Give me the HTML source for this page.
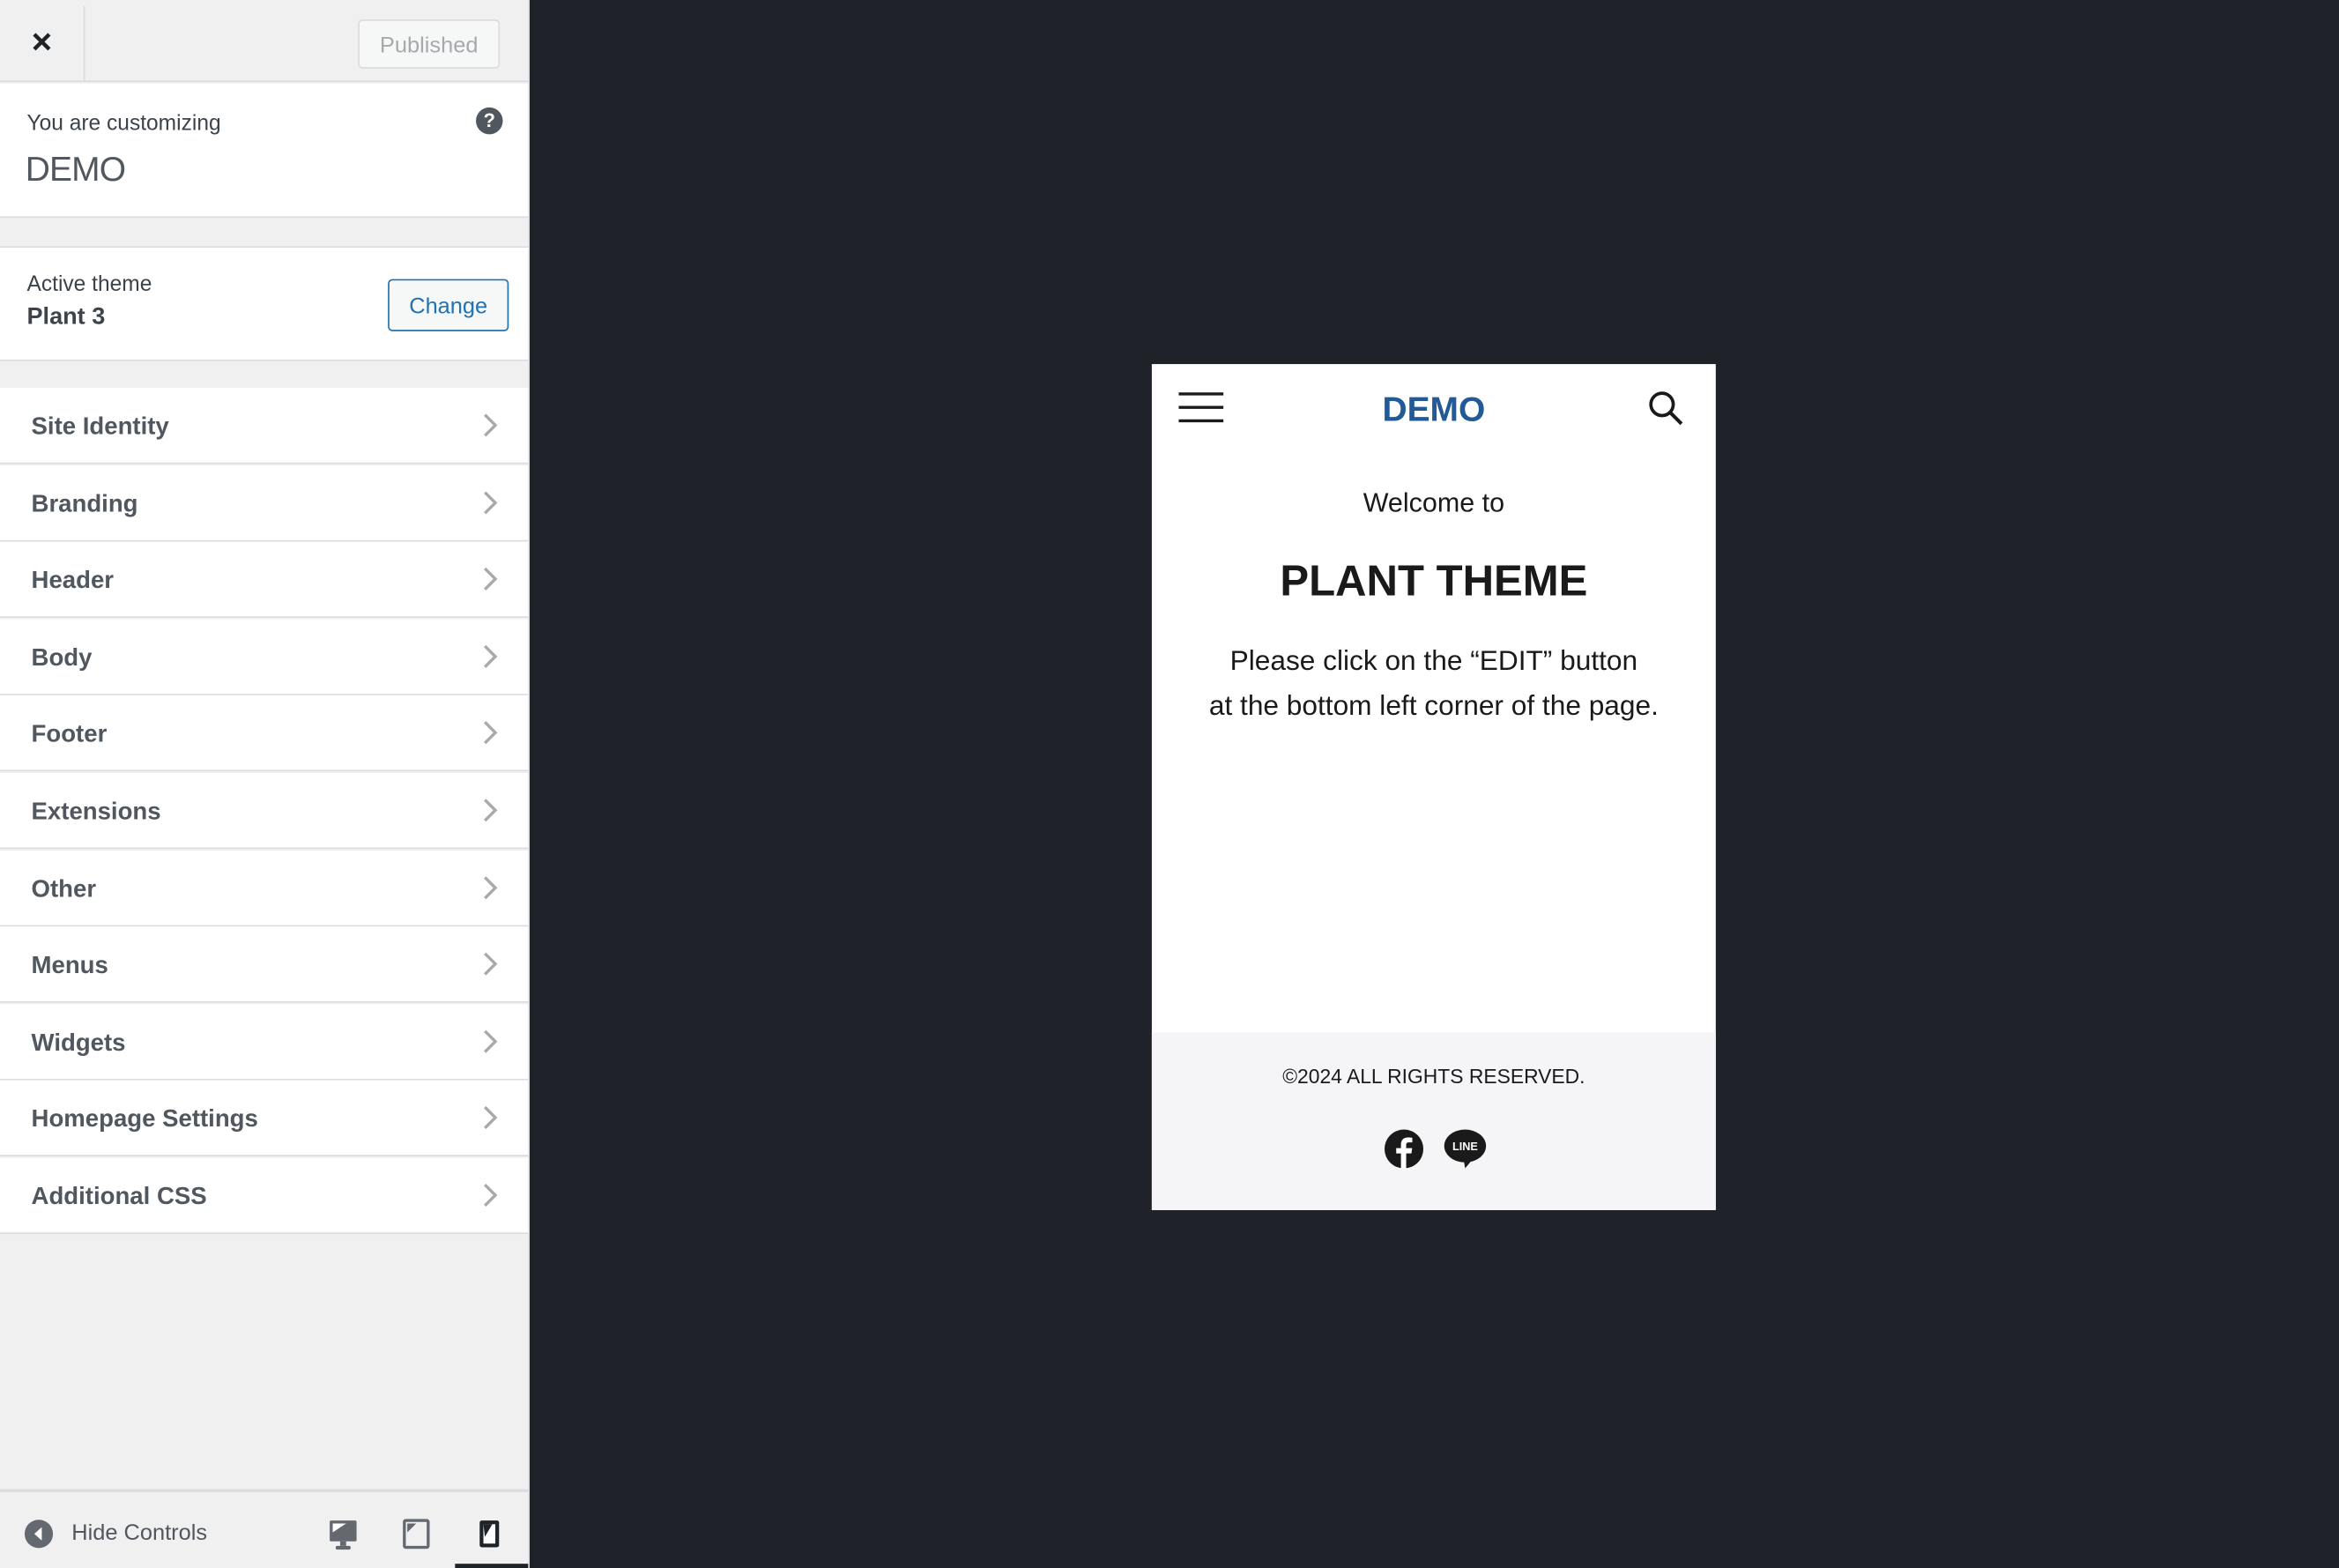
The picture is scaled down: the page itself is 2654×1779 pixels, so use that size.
<!DOCTYPE html>
<html><head><meta charset="utf-8"><style>
html,body{margin:0;padding:0;width:2654px;height:1778px;overflow:hidden;background:#1f2328;}
#w{position:absolute;left:0;top:0;width:1568px;height:1051px;transform:scale(1.6929);transform-origin:0 0;font-family:"Liberation Sans",sans-serif;}
.sb{position:absolute;left:0;top:0;width:354px;height:1051px;background:#f0f0f1;border-right:1px solid #dcdcde;}
.abs{position:absolute;}
.item{position:absolute;left:0;width:354px;height:50px;background:#fff;border-bottom:1.5px solid #dcdcde;}
.item span{position:absolute;left:21px;top:17px;font-size:16.3px;font-weight:bold;color:#50575e;}
.item svg{position:absolute;left:321px;top:16px;}
</style></head><body><div id="w">
<div class="abs" style="left:355px;top:0;width:1213px;height:1051px;background:#1f2329;"></div>
<div class="sb">
 <div class="abs" style="left:0;top:0;width:354px;height:54px;border-bottom:1.5px solid #dcdcde;"></div>
 <div class="abs" style="left:56px;top:4px;width:1px;height:50px;background:#dcdcde;"></div>
 <svg class="abs" style="left:21px;top:21px" width="14" height="14" viewBox="0 0 14 14"><path d="M2 2L12 12M12 2L2 12" stroke="#1d2327" stroke-width="2.6"/></svg>
 <div class="abs" style="left:240px;top:13px;width:93px;height:31px;border:1px solid #dcdcde;border-radius:3px;background:#f6f7f7;color:#a7aaad;font-size:15px;line-height:33px;text-align:center;">Published</div>
 <div class="abs" style="left:0;top:56px;width:354px;height:89px;background:#fff;border-bottom:1.5px solid #dcdcde;"></div>
 <div class="abs" style="left:18px;top:75px;font-size:14.5px;color:#3c434a;">You are customizing</div>
 <div class="abs" style="left:17px;top:100px;font-size:23px;color:#50575e;font-weight:300;letter-spacing:-0.5px;">DEMO</div>
 <div class="abs" style="left:319px;top:72px;width:18px;height:18px;border-radius:50%;background:#50575e;color:#fff;font-size:13px;font-weight:bold;text-align:center;line-height:18px;">?</div>
 <div class="abs" style="left:0;top:165px;width:354px;height:75px;background:#fff;border-top:1.5px solid #dcdcde;border-bottom:1.5px solid #dcdcde;"></div>
 <div class="abs" style="left:18px;top:183px;font-size:14.5px;color:#3c434a;">Active theme</div>
 <div class="abs" style="left:18px;top:204px;font-size:16px;font-weight:bold;color:#3c434a;">Plant 3</div>
 <div class="abs" style="left:260px;top:187px;width:79px;height:33px;border:1px solid #2271b1;border-radius:3px;background:#f6f7f7;color:#2271b1;font-size:15px;line-height:35px;text-align:center;">Change</div>

 <div class="item" style="top:260px"><span>Site Identity</span><svg width="14" height="18" viewBox="0 0 14 18"><path d="M4 2L11 9L4 16" fill="none" stroke="#a7aaad" stroke-width="2"/></svg></div>
 <div class="item" style="top:311.6px"><span>Branding</span><svg width="14" height="18" viewBox="0 0 14 18"><path d="M4 2L11 9L4 16" fill="none" stroke="#a7aaad" stroke-width="2"/></svg></div>
 <div class="item" style="top:363.2px"><span>Header</span><svg width="14" height="18" viewBox="0 0 14 18"><path d="M4 2L11 9L4 16" fill="none" stroke="#a7aaad" stroke-width="2"/></svg></div>
 <div class="item" style="top:414.8px"><span>Body</span><svg width="14" height="18" viewBox="0 0 14 18"><path d="M4 2L11 9L4 16" fill="none" stroke="#a7aaad" stroke-width="2"/></svg></div>
 <div class="item" style="top:466.4px"><span>Footer</span><svg width="14" height="18" viewBox="0 0 14 18"><path d="M4 2L11 9L4 16" fill="none" stroke="#a7aaad" stroke-width="2"/></svg></div>
 <div class="item" style="top:518px"><span>Extensions</span><svg width="14" height="18" viewBox="0 0 14 18"><path d="M4 2L11 9L4 16" fill="none" stroke="#a7aaad" stroke-width="2"/></svg></div>
 <div class="item" style="top:569.6px"><span>Other</span><svg width="14" height="18" viewBox="0 0 14 18"><path d="M4 2L11 9L4 16" fill="none" stroke="#a7aaad" stroke-width="2"/></svg></div>
 <div class="item" style="top:621.2px"><span>Menus</span><svg width="14" height="18" viewBox="0 0 14 18"><path d="M4 2L11 9L4 16" fill="none" stroke="#a7aaad" stroke-width="2"/></svg></div>
 <div class="item" style="top:672.8px"><span>Widgets</span><svg width="14" height="18" viewBox="0 0 14 18"><path d="M4 2L11 9L4 16" fill="none" stroke="#a7aaad" stroke-width="2"/></svg></div>
 <div class="item" style="top:724.4px"><span>Homepage Settings</span><svg width="14" height="18" viewBox="0 0 14 18"><path d="M4 2L11 9L4 16" fill="none" stroke="#a7aaad" stroke-width="2"/></svg></div>
 <div class="item" style="top:776px"><span>Additional CSS</span><svg width="14" height="18" viewBox="0 0 14 18"><path d="M4 2L11 9L4 16" fill="none" stroke="#a7aaad" stroke-width="2"/></svg></div>

 <div class="abs" style="left:0;top:998px;width:354px;height:1.5px;background:#dcdcde;"></div>
 <svg class="abs" style="left:15px;top:1017px" width="22" height="22" viewBox="0 0 22 22"><circle cx="11" cy="11" r="9.5" fill="#646970"/><path d="M13 6.5L8 11L13 15.5Z" fill="#fff"/></svg>
 <div class="abs" style="left:48px;top:1019px;font-size:15px;color:#50575e;">Hide Controls</div>
 <svg class="abs" style="left:220px;top:1017px" width="20" height="22" viewBox="0 0 20 22"><rect x="1" y="2" width="18" height="14" rx="1" fill="#646970"/><path d="M3 4H12L3 10Z" fill="#fff"/><rect x="8" y="16" width="4" height="3" fill="#646970"/><rect x="5" y="19" width="10" height="2.5" rx="1" fill="#646970"/></svg>
 <svg class="abs" style="left:270px;top:1017px" width="18" height="22" viewBox="0 0 18 22"><rect x="1" y="2" width="16" height="18" rx="1" fill="none" stroke="#646970" stroke-width="2"/><path d="M3 4H9L3 10Z" fill="#646970"/></svg>
 <svg class="abs" style="left:320px;top:1017px" width="16" height="22" viewBox="0 0 16 22"><rect x="1.5" y="2" width="13" height="18" rx="1.5" fill="#1d2327"/><rect x="4" y="4.5" width="8" height="13" fill="#fff"/><path d="M4 4.5H10L5 13Z" fill="#1d2327"/></svg>
 <div class="abs" style="left:305px;top:1048px;width:49px;height:3px;background:#1d2327;"></div>
</div>

<div class="abs" style="left:772px;top:244px;width:378px;height:567px;background:#fff;">
 <svg class="abs" style="left:18px;top:18px" width="31" height="24" viewBox="0 0 31 24"><path d="M0 2H30M0 11H30M0 20H30" stroke="#1a1a1a" stroke-width="2"/></svg>
 <div class="abs" style="left:0;top:17px;width:378px;text-align:center;font-size:23px;font-weight:bold;color:#215a96;">DEMO</div>
 <svg class="abs" style="left:332px;top:17px" width="26" height="26" viewBox="0 0 26 26"><circle cx="10" cy="10" r="7.5" fill="none" stroke="#1a1a1a" stroke-width="2.2"/><path d="M15.5 15.5L23 23" stroke="#1a1a1a" stroke-width="2.4"/></svg>
 <div class="abs" style="left:0;top:83px;width:378px;text-align:center;font-size:18px;color:#1a1a1a;">Welcome to</div>
 <div class="abs" style="left:0;top:130px;width:378px;text-align:center;font-size:29px;font-weight:bold;color:#1a1a1a;">PLANT THEME</div>
 <div class="abs" style="left:-10px;top:184px;width:398px;text-align:center;font-size:18.7px;line-height:30px;color:#1a1a1a;">Please click on the “EDIT” button<br>at the bottom left corner of the page.</div>
 <div class="abs" style="left:0;top:448px;width:378px;height:119px;background:#f5f5f7;">
  <div class="abs" style="left:0;top:22px;width:378px;text-align:center;font-size:13.5px;color:#1a1a1a;">©2024 ALL RIGHTS RESERVED.</div>
  <svg class="abs" style="left:155px;top:64px" width="28" height="28" viewBox="0 0 28 28"><circle cx="14" cy="14" r="13" fill="#1a1a1a"/><path d="M15.5 27V17H19L19.5 13.5H15.5V11.3C15.5 10.3 15.9 9.6 17.3 9.6H19.6V6.5C19.2 6.4 18 6.3 16.7 6.3 13.8 6.3 12 8 12 11V13.5H8.8V17H12V27Z" fill="#fff"/></svg>
  <svg class="abs" style="left:195px;top:64px" width="30" height="28" viewBox="0 0 30 28"><ellipse cx="15" cy="12" rx="14" ry="11" fill="#1a1a1a"/><path d="M14 21L15 27L20 21Z" fill="#1a1a1a"/><text x="15" y="15" text-anchor="middle" font-family="Liberation Sans,sans-serif" font-size="7.5" font-weight="bold" fill="#fff">LINE</text></svg>
 </div>
</div>
</div></body></html>
